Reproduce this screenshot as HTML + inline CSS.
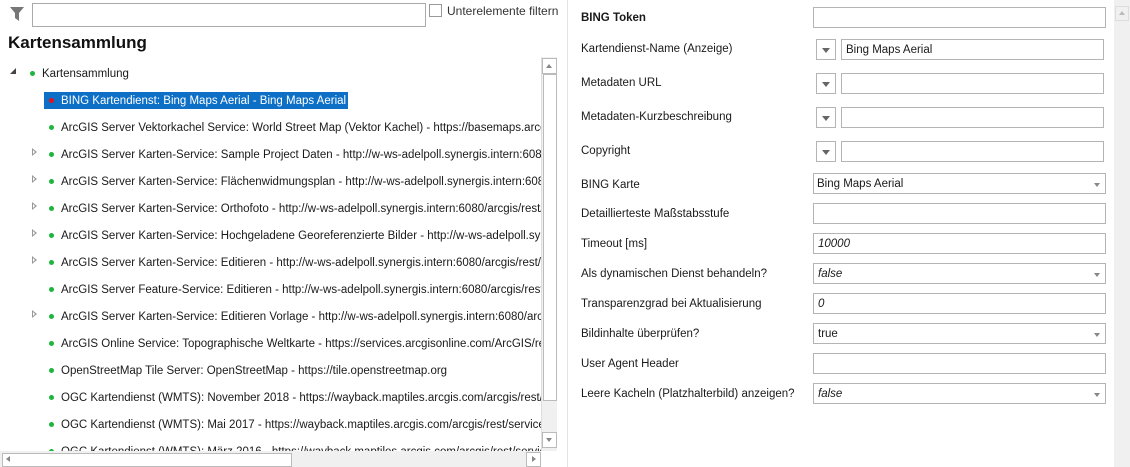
<!DOCTYPE html>
<html><head><meta charset="utf-8"><style>
*{margin:0;padding:0;box-sizing:border-box}
body{width:1130px;height:467px;overflow:hidden;background:#fff;font-family:"Liberation Sans",sans-serif;font-size:11.5px;color:#1a1a1a;position:relative}
.a{position:absolute;white-space:nowrap}
.box{position:absolute;border:1px solid #b4b4b4;background:#fff;height:21px}
.lbl{position:absolute;left:581px;white-space:nowrap;margin-top:2px}
.dd{position:absolute;left:816px;width:20px;height:21px;border:1px solid #b4b4b4}
.tri{position:absolute;width:0;height:0;border-left:4px solid transparent;border-right:4px solid transparent;border-top:5px solid #666}
.dot{position:absolute;width:5px;height:5px;border-radius:50%;background:#1db53d}
.exp{position:absolute;width:0;height:0;border-top:4px solid transparent;border-bottom:4px solid transparent;border-left:5px solid #999}
.exp:after{content:"";position:absolute;left:-4px;top:-2px;border-top:2px solid transparent;border-bottom:2px solid transparent;border-left:2.5px solid #fff}
.val{position:absolute;padding-left:4px;line-height:21px;top:0}
.t{position:absolute;white-space:nowrap;margin-top:2px}
</style></head><body>
<svg class="a" style="left:9px;top:5px" width="16" height="17"><path d="M1 2H15L10 8V16L6 13V8Z" fill="#777"/></svg>
<div class="box" style="left:32px;top:3px;width:394px;height:24px;border-color:#aaa"></div>
<div class="a" style="left:429px;top:4px;width:13px;height:13px;border:1px solid #999"></div>
<div class="a" style="left:447px;top:4px;font-size:12px;color:#333">Unterelemente filtern</div>
<div class="a" style="left:8px;top:33px;font-size:17px;font-weight:bold;color:#111">Kartensammlung</div>
<div class="a" style="left:0;top:57px;width:541px;height:394px;overflow:hidden">
<div class="a" style="left:10px;top:11px;width:0;height:0;border-left:6px solid transparent;border-bottom:6px solid #444"></div>
<div class="dot" style="left:30px;top:14px"></div>
<div class="t" style="left:42px;top:9px">Kartensammlung</div>
<div class="a" style="left:44px;top:35px;width:304px;height:17px;background:#0d6fc6"></div>
<div class="dot" style="left:49px;top:41px;background:#e8101a"></div>
<div class="t" style="left:61px;top:36px;color:#fff">BING Kartendienst: Bing Maps Aerial - Bing Maps Aerial</div>
<div class="dot" style="left:49px;top:68px"></div><div class="t" style="left:61px;top:63px">ArcGIS Server Vektorkachel Service: World Street Map (Vektor Kachel) - https://basemaps.arcgis.com/arcgis/rest</div>
<div class="exp" style="left:32px;top:91px"></div><div class="dot" style="left:49px;top:95px"></div><div class="t" style="left:61px;top:90px">ArcGIS Server Karten-Service: Sample Project Daten - http://w-ws-adelpoll.synergis.intern:6080/arcgis/rest</div>
<div class="exp" style="left:32px;top:118px"></div><div class="dot" style="left:49px;top:122px"></div><div class="t" style="left:61px;top:117px">ArcGIS Server Karten-Service: Flächenwidmungsplan - http://w-ws-adelpoll.synergis.intern:6080/arcgis/rest</div>
<div class="exp" style="left:32px;top:145px"></div><div class="dot" style="left:49px;top:149px"></div><div class="t" style="left:61px;top:144px">ArcGIS Server Karten-Service: Orthofoto - http://w-ws-adelpoll.synergis.intern:6080/arcgis/rest/services</div>
<div class="exp" style="left:32px;top:172px"></div><div class="dot" style="left:49px;top:176px"></div><div class="t" style="left:61px;top:171px">ArcGIS Server Karten-Service: Hochgeladene Georeferenzierte Bilder - http://w-ws-adelpoll.synergis.intern</div>
<div class="exp" style="left:32px;top:199px"></div><div class="dot" style="left:49px;top:203px"></div><div class="t" style="left:61px;top:198px">ArcGIS Server Karten-Service: Editieren - http://w-ws-adelpoll.synergis.intern:6080/arcgis/rest/services</div>
<div class="dot" style="left:49px;top:230px"></div><div class="t" style="left:61px;top:225px">ArcGIS Server Feature-Service: Editieren - http://w-ws-adelpoll.synergis.intern:6080/arcgis/rest/services</div>
<div class="exp" style="left:32px;top:253px"></div><div class="dot" style="left:49px;top:257px"></div><div class="t" style="left:61px;top:252px">ArcGIS Server Karten-Service: Editieren Vorlage - http://w-ws-adelpoll.synergis.intern:6080/arcgis/rest</div>
<div class="dot" style="left:49px;top:284px"></div><div class="t" style="left:61px;top:279px">ArcGIS Online Service: Topographische Weltkarte - https://services.arcgisonline.com/ArcGIS/rest/services</div>
<div class="dot" style="left:49px;top:311px"></div><div class="t" style="left:61px;top:306px">OpenStreetMap Tile Server: OpenStreetMap - https://tile.openstreetmap.org</div>
<div class="dot" style="left:49px;top:338px"></div><div class="t" style="left:61px;top:333px">OGC Kartendienst (WMTS): November 2018 - https://wayback.maptiles.arcgis.com/arcgis/rest/services</div>
<div class="dot" style="left:49px;top:365px"></div><div class="t" style="left:61px;top:360px">OGC Kartendienst (WMTS): Mai 2017 - https://wayback.maptiles.arcgis.com/arcgis/rest/services/World</div>
<div class="dot" style="left:49px;top:392px"></div><div class="t" style="left:61px;top:387px">OGC Kartendienst (WMTS): März 2016 - https://wayback.maptiles.arcgis.com/arcgis/rest/services</div>
</div>
<div class="a" style="left:541px;top:57px;width:16px;height:394px;background:#f0f0f0;border-left:1px solid #ddd"></div>
<div class="a" style="left:542px;top:58px;width:15px;height:16px;background:#fff;border:1px solid #bbb"></div>
<div class="a" style="left:543px;top:74px;width:14px;height:327px;background:#fff;border:1px solid #bbb"></div>
<div class="a" style="left:542px;top:432px;width:15px;height:16px;background:#fff;border:1px solid #bbb"></div>
<div class="a" style="left:546px;top:64px;border-left:3px solid transparent;border-right:3px solid transparent;border-bottom:4px solid #888"></div>
<div class="a" style="left:546px;top:438px;border-left:3px solid transparent;border-right:3px solid transparent;border-top:4px solid #888"></div>
<div class="a" style="left:0;top:451px;width:541px;height:16px;background:#f0f0f0"></div>
<div class="a" style="left:2px;top:453px;width:290px;height:14px;background:#fff;border:1px solid #bbb"></div>
<div class="a" style="left:526px;top:452px;width:15px;height:15px;background:#fff;border:1px solid #bbb"></div>
<div class="a" style="left:6px;top:456px;border-top:3px solid transparent;border-bottom:3px solid transparent;border-right:4px solid #888"></div>
<div class="a" style="left:532px;top:456px;border-top:3px solid transparent;border-bottom:3px solid transparent;border-left:4px solid #888"></div>
<div class="a" style="left:567px;top:0;width:1px;height:467px;background:#e3e3e3"></div>
<div class="a" style="left:1114px;top:0;width:16px;height:467px;background:#f0f0f0"></div>
<div class="a" style="left:1115px;top:6px;width:14px;height:15px;border:1px solid #ddd"></div>
<div class="a" style="left:1119px;top:11px;border-left:3px solid transparent;border-right:3px solid transparent;border-bottom:4px solid #bbb"></div>
<div class="lbl" style="top:10px;font-weight:bold">BING Token</div>
<div class="box" style="left:813px;top:7px;width:293px"></div>
<div class="lbl" style="top:41px">Kartendienst-Name (Anzeige)</div>
<div class="dd" style="top:39px"></div><div class="tri" style="left:822px;top:48px"></div>
<div class="box" style="left:841px;top:39px;width:263px"><div class="val">Bing Maps Aerial</div></div>
<div class="lbl" style="top:75px">Metadaten URL</div>
<div class="dd" style="top:73px"></div><div class="tri" style="left:822px;top:82px"></div>
<div class="box" style="left:841px;top:73px;width:263px"></div>
<div class="lbl" style="top:109px">Metadaten-Kurzbeschreibung</div>
<div class="dd" style="top:107px"></div><div class="tri" style="left:822px;top:116px"></div>
<div class="box" style="left:841px;top:107px;width:263px"></div>
<div class="lbl" style="top:143px">Copyright</div>
<div class="dd" style="top:141px"></div><div class="tri" style="left:822px;top:150px"></div>
<div class="box" style="left:841px;top:141px;width:263px"></div>
<div class="lbl" style="top:177px">BING Karte</div>
<div class="box" style="left:813px;top:173px;width:293px"><div class="val" style="padding-left:3px">Bing Maps Aerial</div></div><div class="tri" style="left:1094px;top:183px;border-top-color:#888;border-width:4px 3px 0"></div>
<div class="lbl" style="top:206px">Detaillierteste Maßstabsstufe</div>
<div class="box" style="left:813px;top:203px;width:293px"></div>
<div class="lbl" style="top:236px">Timeout [ms]</div>
<div class="box" style="left:813px;top:233px;width:293px"><div class="val" style="font-style:italic">10000</div></div>
<div class="lbl" style="top:266px">Als dynamischen Dienst behandeln?</div>
<div class="box" style="left:813px;top:263px;width:293px"><div class="val" style="font-style:italic">false</div></div><div class="tri" style="left:1094px;top:273px;border-top-color:#888;border-width:4px 3px 0"></div>
<div class="lbl" style="top:296px">Transparenzgrad bei Aktualisierung</div>
<div class="box" style="left:813px;top:293px;width:293px"><div class="val" style="font-style:italic">0</div></div>
<div class="lbl" style="top:326px">Bildinhalte überprüfen?</div>
<div class="box" style="left:813px;top:323px;width:293px"><div class="val">true</div></div><div class="tri" style="left:1094px;top:333px;border-top-color:#888;border-width:4px 3px 0"></div>
<div class="lbl" style="top:356px">User Agent Header</div>
<div class="box" style="left:813px;top:353px;width:293px"></div>
<div class="lbl" style="top:386px">Leere Kacheln (Platzhalterbild) anzeigen?</div>
<div class="box" style="left:813px;top:383px;width:293px"><div class="val" style="font-style:italic">false</div></div><div class="tri" style="left:1094px;top:393px;border-top-color:#888;border-width:4px 3px 0"></div>
</body></html>
